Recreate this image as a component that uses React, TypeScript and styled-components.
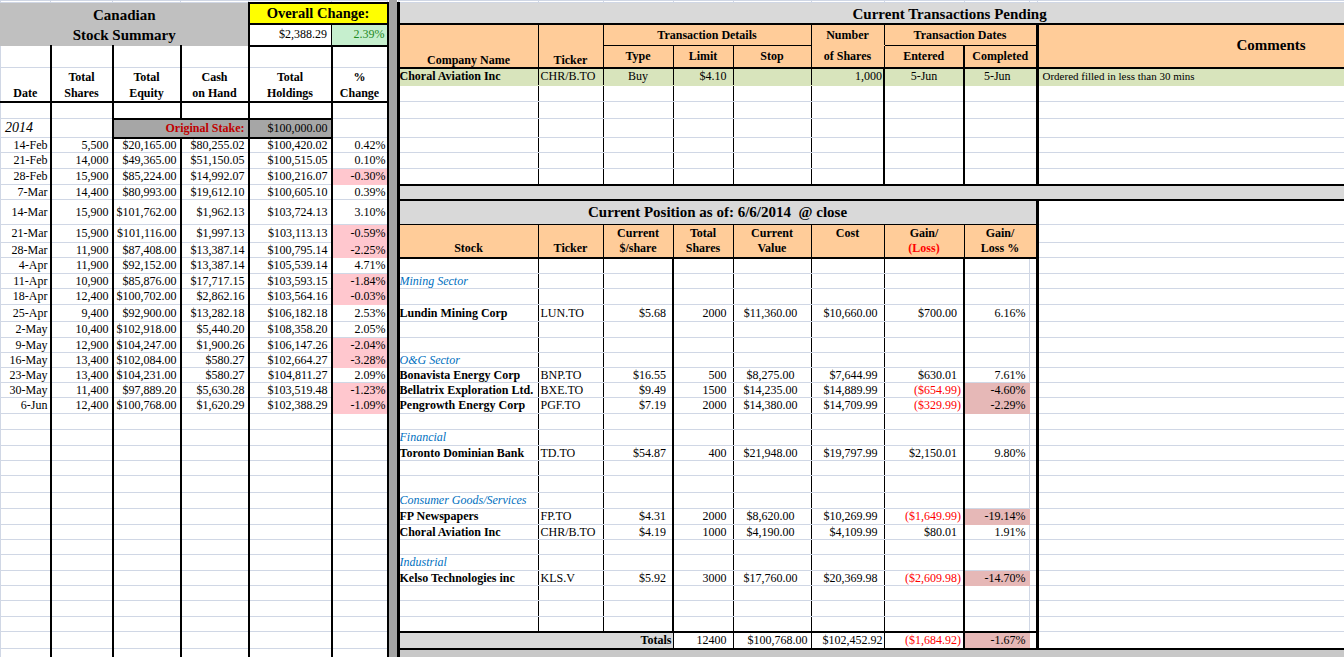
import React from 'react';
import styled, { createGlobalStyle } from 'styled-components';

// Sheet colours
const GRID = '#d0d7e5';
const ORANGE = '#ffcc99';
const GREEN_ROW = '#d8e4bc';
const BAND = '#d9d9d9';
const PINK_SOFT = '#ffc7ce';
const PINK = '#e6b8b7';

const B1 = '1px solid #000';
const B2 = '2px solid #000';
const B3 = '3px solid #000';

// Row heights shared by both panes (the window is split, rows line up)
const ROW_H = [
  2, 21, 22, 22, 18, 16, 17, 19, 15, 16, 16, 15, 25, 18, 15, 16, 15, 16, 17, 16, 15,
  15, 15, 15, 16, 16, 16, 15, 15, 17, 16, 16, 15, 15, 16, 15, 15, 16, 15, 17, 20,
];

const LEFT_COLS = [50, 62, 68, 68, 83, 56];
const RIGHT_COLS = [140, 65, 70, 60, 78, 73, 80, 65, 8, 310];

interface IWeek {
  date: string;
  shares: string;
  equity: string;
  cash: string;
  holdings: string;
  pct: string;
}

const HISTORY: IWeek[] = [
  { date: '14-Feb', shares: '5,500', equity: '$20,165.00', cash: '$80,255.02', holdings: '$100,420.02', pct: '0.42%' },
  { date: '21-Feb', shares: '14,000', equity: '$49,365.00', cash: '$51,150.05', holdings: '$100,515.05', pct: '0.10%' },
  { date: '28-Feb', shares: '15,900', equity: '$85,224.00', cash: '$14,992.07', holdings: '$100,216.07', pct: '-0.30%' },
  { date: '7-Mar', shares: '14,400', equity: '$80,993.00', cash: '$19,612.10', holdings: '$100,605.10', pct: '0.39%' },
  { date: '14-Mar', shares: '15,900', equity: '$101,762.00', cash: '$1,962.13', holdings: '$103,724.13', pct: '3.10%' },
  { date: '21-Mar', shares: '15,900', equity: '$101,116.00', cash: '$1,997.13', holdings: '$103,113.13', pct: '-0.59%' },
  { date: '28-Mar', shares: '11,900', equity: '$87,408.00', cash: '$13,387.14', holdings: '$100,795.14', pct: '-2.25%' },
  { date: '4-Apr', shares: '11,900', equity: '$92,152.00', cash: '$13,387.14', holdings: '$105,539.14', pct: '4.71%' },
  { date: '11-Apr', shares: '10,900', equity: '$85,876.00', cash: '$17,717.15', holdings: '$103,593.15', pct: '-1.84%' },
  { date: '18-Apr', shares: '12,400', equity: '$100,702.00', cash: '$2,862.16', holdings: '$103,564.16', pct: '-0.03%' },
  { date: '25-Apr', shares: '9,400', equity: '$92,900.00', cash: '$13,282.18', holdings: '$106,182.18', pct: '2.53%' },
  { date: '2-May', shares: '10,400', equity: '$102,918.00', cash: '$5,440.20', holdings: '$108,358.20', pct: '2.05%' },
  { date: '9-May', shares: '12,900', equity: '$104,247.00', cash: '$1,900.26', holdings: '$106,147.26', pct: '-2.04%' },
  { date: '16-May', shares: '13,400', equity: '$102,084.00', cash: '$580.27', holdings: '$102,664.27', pct: '-3.28%' },
  { date: '23-May', shares: '13,400', equity: '$104,231.00', cash: '$580.27', holdings: '$104,811.27', pct: '2.09%' },
  { date: '30-May', shares: '11,400', equity: '$97,889.20', cash: '$5,630.28', holdings: '$103,519.48', pct: '-1.23%' },
  { date: '6-Jun', shares: '12,400', equity: '$100,768.00', cash: '$1,620.29', holdings: '$102,388.29', pct: '-1.09%' },
];

interface IHolding {
  name: string;
  ticker: string;
  price: string;
  shares: string;
  value: string;
  cost: string;
  gain: string;
  pct: string;
}

type PositionLine =
  | { kind: 'blank' }
  | { kind: 'sector'; label: string }
  | { kind: 'stock'; stock: IHolding };

const blank: PositionLine = { kind: 'blank' };
const sector = (label: string): PositionLine => ({ kind: 'sector', label });
const stock = (...v: string[]): PositionLine => ({
  kind: 'stock',
  stock: { name: v[0], ticker: v[1], price: v[2], shares: v[3], value: v[4], cost: v[5], gain: v[6], pct: v[7] },
});

// rows 15..38 of the sheet
const POSITIONS: PositionLine[] = [
  blank,
  sector('Mining Sector'),
  blank,
  stock('Lundin Mining Corp', 'LUN.TO', '$5.68', '2000', '$11,360.00', '$10,660.00', '$700.00', '6.16%'),
  blank,
  blank,
  sector('O&G Sector'),
  stock('Bonavista Energy Corp', 'BNP.TO', '$16.55', '500', '$8,275.00', '$7,644.99', '$630.01', '7.61%'),
  stock('Bellatrix Exploration Ltd.', 'BXE.TO', '$9.49', '1500', '$14,235.00', '$14,889.99', '($654.99)', '-4.60%'),
  stock('Pengrowth Energy Corp', 'PGF.TO', '$7.19', '2000', '$14,380.00', '$14,709.99', '($329.99)', '-2.29%'),
  blank,
  sector('Financial'),
  stock('Toronto Dominian Bank', 'TD.TO', '$54.87', '400', '$21,948.00', '$19,797.99', '$2,150.01', '9.80%'),
  blank,
  blank,
  sector('Consumer Goods/Services'),
  stock('FP Newspapers', 'FP.TO', '$4.31', '2000', '$8,620.00', '$10,269.99', '($1,649.99)', '-19.14%'),
  stock('Choral Aviation Inc', 'CHR/B.TO', '$4.19', '1000', '$4,190.00', '$4,109.99', '$80.01', '1.91%'),
  blank,
  sector('Industrial'),
  stock('Kelso Technologies inc', 'KLS.V', '$5.92', '3000', '$17,760.00', '$20,369.98', '($2,609.98)', '-14.70%'),
  blank,
  blank,
  blank,
];

const POSITION_HEAD: { top: React.ReactNode; bottom: React.ReactNode }[] = [
  { top: '', bottom: 'Stock' },
  { top: '', bottom: 'Ticker' },
  { top: 'Current', bottom: '$/share' },
  { top: 'Total', bottom: 'Shares' },
  { top: 'Current', bottom: 'Value' },
  { top: 'Cost', bottom: '' },
  { top: 'Gain/', bottom: 'loss' },
  { top: 'Gain/', bottom: 'Loss %' },
];

const TX_RIGHT = [B1, B1, B1, B1, B1, B2, B2, B3];

const GlobalStyle = createGlobalStyle`
  html, body {
    margin: 0;
    padding: 0;
    background: #fff;
  }
  body {
    font-family: 'Liberation Serif', 'Times New Roman', serif;
  }
`;

export default function App() {
  return (
    <>
      <GlobalStyle />
      <Sheet>
        <SummaryPane />
        <SplitBar />
        <PositionsPane />
      </Sheet>
    </>
  );
}

const SummaryPane = () => (
  <Grid $w={387}>
    <colgroup>
      {LEFT_COLS.map((w, i) => (
        <Col key={i} $w={w} />
      ))}
    </colgroup>
    <tbody>
      <Row $h={ROW_H[0]}>
        {LEFT_COLS.map((_, c) => (
          <Cell key={c} />
        ))}
      </Row>
      <Row $h={ROW_H[1]}>
        <SummaryTitle colSpan={4} rowSpan={2}>
          Canadian
          <br />
          Stock Summary
        </SummaryTitle>
        <OverallLabel colSpan={2} $l={B2} $r={B2} $t={B2} $b={B2}>
          Overall Change:
        </OverallLabel>
      </Row>
      <Row $h={ROW_H[2]}>
        <NumCell $l={B2} $r={B1} $b={B2} $pr={4}>
          $2,388.29
        </NumCell>
        <GoodCell $r={B2} $b={B2} $pr={2}>
          2.39%
        </GoodCell>
      </Row>
      <Row $h={ROW_H[3]}>
        {LEFT_COLS.map((_, c) => (
          <Cell key={c} $r={B2} />
        ))}
      </Row>
      <Row $h={ROW_H[4]}>
        <LeftHead rowSpan={2} $r={B2} $b={B2}>
          Date
        </LeftHead>
        <LeftHead rowSpan={2} $r={B2} $b={B2}>
          Total
          <br />
          Shares
        </LeftHead>
        <LeftHead rowSpan={2} $r={B2} $b={B2}>
          Total
          <br />
          Equity
        </LeftHead>
        <LeftHead rowSpan={2} $r={B2} $b={B2}>
          Cash
          <br />
          on Hand
        </LeftHead>
        <LeftHead rowSpan={2} $r={B2} $b={B2}>
          Total
          <br />
          Holdings
        </LeftHead>
        <LeftHead rowSpan={2} $r={B2} $b={B2}>
          %
          <br />
          Change
        </LeftHead>
      </Row>
      <Row $h={ROW_H[5]} />
      <Row $h={ROW_H[6]}>
        {LEFT_COLS.map((_, c) => (
          <Cell key={c} $r={B2} />
        ))}
      </Row>
      <Row $h={ROW_H[7]}>
        <YearCell $r={B2}>2014</YearCell>
        <Cell $r={B2} />
        <StakeLabel colSpan={2} $l={B2} $r={B2} $t={B2} $b={B2} $pr={3}>
          Original Stake:
        </StakeLabel>
        <StakeValue $r={B2} $t={B2} $b={B2} $pr={3}>
          $100,000.00
        </StakeValue>
        <Cell $r={B2} />
      </Row>
      {HISTORY.map((h, i) => {
        const neg = h.pct.startsWith('-');
        return (
          <Row key={h.date} $h={ROW_H[8 + i]}>
            <NumCell $r={B2}>{h.date}</NumCell>
            <NumCell $r={B2} $pr={3}>
              {h.shares}
            </NumCell>
            <NumCell $r={B2} $pr={3}>
              {h.equity}
            </NumCell>
            <NumCell $r={B2} $pr={3}>
              {h.cash}
            </NumCell>
            <NumCell $r={B2} $pr={3}>
              {h.holdings}
            </NumCell>
            <NumCell $r={B2} $pr={1} $fill={neg ? PINK_SOFT : undefined}>
              {h.pct}
            </NumCell>
          </Row>
        );
      })}
      {ROW_H.slice(8 + HISTORY.length).map((h, i) => (
        <Row key={`e${i}`} $h={h}>
          {LEFT_COLS.map((_, c) => (
            <Cell key={c} $r={B2} />
          ))}
        </Row>
      ))}
    </tbody>
  </Grid>
);

const PositionsPane = () => (
  <Grid $w={949}>
    <colgroup>
      {RIGHT_COLS.map((w, i) => (
        <Col key={i} $w={w} />
      ))}
    </colgroup>
    <tbody>
      <Row $h={ROW_H[0]}>
        {RIGHT_COLS.map((_, c) => (
          <Cell key={c} />
        ))}
      </Row>

      {/* Current transactions pending */}
      <Row $h={ROW_H[1]}>
        <BandTitle colSpan={10} $l={B3} $b={B2} $pl={453}>
          Current Transactions Pending
        </BandTitle>
      </Row>
      <Row $h={ROW_H[2]}>
        <OrangeHead rowSpan={2} $l={B3} $r={B1} $b={B2} $v="bottom">
          Company Name
        </OrangeHead>
        <OrangeHead rowSpan={2} $r={B1} $b={B2} $v="bottom">
          Ticker
        </OrangeHead>
        <OrangeHead colSpan={3} $r={B1} $b={B1}>
          Transaction Details
        </OrangeHead>
        <OrangeHead $r={B1}>Number</OrangeHead>
        <OrangeHead colSpan={3} $r={B3} $b={B1}>
          Transaction Dates
        </OrangeHead>
        <CommentsHead rowSpan={2} $b={B2} $pl={198}>
          Comments
        </CommentsHead>
      </Row>
      <Row $h={ROW_H[3]}>
        <OrangeHead $r={B1} $b={B2}>Type</OrangeHead>
        <OrangeHead $r={B1} $b={B2}>Limit</OrangeHead>
        <OrangeHead $r={B1} $b={B2}>Stop</OrangeHead>
        <OrangeHead $r={B1} $b={B2}>of Shares</OrangeHead>
        <OrangeHead $r={B2} $b={B2}>Entered</OrangeHead>
        <OrangeHead colSpan={2} $r={B3} $b={B2}>
          Completed
        </OrangeHead>
      </Row>
      <Row $h={ROW_H[4]}>
        <NameCell $fill={GREEN_ROW} $l={B3} $r={TX_RIGHT[0]} $pl={0}>
          Choral Aviation Inc
        </NameCell>
        <Cell $fill={GREEN_ROW} $r={TX_RIGHT[1]}>
          CHR/B.TO
        </Cell>
        <Cell $fill={GREEN_ROW} $r={TX_RIGHT[2]} $align="center">
          Buy
        </Cell>
        <NumCell $fill={GREEN_ROW} $r={TX_RIGHT[3]} $pr={6}>
          $4.10
        </NumCell>
        <Cell $fill={GREEN_ROW} $r={TX_RIGHT[4]} />
        <NumCell $fill={GREEN_ROW} $r={TX_RIGHT[5]} $pr={1}>
          1,000
        </NumCell>
        <Cell $fill={GREEN_ROW} $r={TX_RIGHT[6]} $align="center">
          5-Jun
        </Cell>
        <Cell colSpan={2} $fill={GREEN_ROW} $r={TX_RIGHT[7]} $align="center" $pr={8}>
          5-Jun
        </Cell>
        <CommentCell $fill={GREEN_ROW} $pl={4}>
          Ordered filled in less than 30 mins
        </CommentCell>
      </Row>
      {ROW_H.slice(5, 11).map((h, i) => (
        <Row key={`tx${i}`} $h={h}>
          {TX_RIGHT.map((r, c) => (
            <Cell key={c} colSpan={c === 7 ? 2 : 1} $l={c === 0 ? B3 : undefined} $r={r} />
          ))}
          <Cell />
        </Row>
      ))}
      <Row $h={ROW_H[11]}>
        <BandTitle colSpan={10} $l={B3} $t={B2} $b={B2} />
      </Row>

      {/* Current position */}
      <Row $h={ROW_H[12]}>
        <PositionTitle colSpan={9} $l={B3} $r={B3} $b={B1}>
          Current Position as of: 6/6/2014{'\u00a0\u00a0'}@ close
        </PositionTitle>
        <Cell />
      </Row>
      <Row $h={ROW_H[13]}>
        {POSITION_HEAD.map((h, c) => (
          <PositionHead
            key={c}
            rowSpan={2}
            colSpan={c === 7 ? 2 : 1}
            $l={c === 0 ? B3 : undefined}
            $r={c === 7 ? B3 : B1}
            $b={B2}
          >
            {h.top || '\u00a0'}
            <br />
            {c === 6 ? <LossText>(Loss)</LossText> : h.bottom || '\u00a0'}
          </PositionHead>
        ))}
        <Cell />
      </Row>
      <Row $h={ROW_H[14]}>
        <Cell />
      </Row>
      {POSITIONS.map((line, i) => (
        <PositionRow key={i} line={line} h={ROW_H[15 + i]} />
      ))}
      <Row $h={ROW_H[39]}>
        <TotalsLabel colSpan={3} $l={B3} $r={B1} $t={B2} $b={B2} $pr={1}>
          Totals
        </TotalsLabel>
        <NumCell $r={B1} $t={B2} $b={B2} $pr={6}>
          12400
        </NumCell>
        <NumCell $r={B1} $t={B2} $b={B2} $pr={3}>
          $100,768.00
        </NumCell>
        <NumCell $r={B1} $t={B2} $b={B2} $pr={1}>
          $102,452.92
        </NumCell>
        <LossCell $r={B2} $t={B2} $b={B2} $pr={2}>
          ($1,684.92)
        </LossCell>
        <NumCell $fill={PINK} $t={B2} $b={B2} $pr={3}>
          -1.67%
        </NumCell>
        <Cell $r={B3} $t={B2} $b={B2} />
        <Cell $b={B2} />
      </Row>
      <Row $h={ROW_H[40]}>
        <BottomBand colSpan={10} $l={B3} $t={B2} />
      </Row>
    </tbody>
  </Grid>
);

const PositionRow = ({ line, h }: { line: PositionLine; h: number }) => {
  const s = line.kind === 'stock' ? line.stock : null;
  const gainNeg = !!s && s.gain.startsWith('(');
  const pctNeg = !!s && s.pct.startsWith('-');
  return (
    <Row $h={h}>
      {line.kind === 'sector' ? (
        <SectorCell $l={B3} $r={B1} $pl={0}>
          {line.label}
        </SectorCell>
      ) : (
        <NameCell $l={B3} $r={B1} $pl={0}>
          {s?.name}
        </NameCell>
      )}
      <Cell $r={B1}>{s?.ticker}</Cell>
      <NumCell $r={B2} $pr={6}>
        {s?.price}
      </NumCell>
      <NumCell $r={B1} $pr={6}>
        {s?.shares}
      </NumCell>
      <Cell $r={B1} $align="center" $pr={5}>
        {s?.value}
      </Cell>
      <NumCell $r={B1} $pr={6}>
        {s?.cost}
      </NumCell>
      {gainNeg ? (
        <LossCell $r={B2} $pr={2}>
          {s?.gain}
        </LossCell>
      ) : (
        <NumCell $r={B2} $pr={6}>
          {s?.gain}
        </NumCell>
      )}
      <NumCell $fill={pctNeg ? PINK : undefined} $pr={3}>
        {s?.pct}
      </NumCell>
      <Cell $r={B3} />
      <Cell />
    </Row>
  );
};

interface CellProps {
  $l?: string;
  $r?: string;
  $t?: string;
  $b?: string;
  $fill?: string;
  $align?: 'left' | 'center' | 'right';
  $v?: 'top' | 'middle' | 'bottom';
  $pl?: number;
  $pr?: number;
}

const edges = (p: CellProps) => `
  ${p.$fill ? `background: ${p.$fill}; border-color: ${p.$fill};` : ''}
  ${p.$l ? `border-left: ${p.$l};` : ''}
  ${p.$r ? `border-right: ${p.$r};` : ''}
  ${p.$t ? `border-top: ${p.$t};` : ''}
  ${p.$b ? `border-bottom: ${p.$b};` : ''}
`;

const Sheet = styled.div`
  display: flex;
  align-items: flex-start;
  width: 1344px;
  height: 657px;
  overflow: hidden;
  background: #fff;
`;

const SplitBar = styled.div`
  flex: none;
  width: 8px;
  height: 657px;
  background: #a5a5a5;
`;

const Grid = styled.table<{ $w: number }>`
  flex: none;
  width: ${p => p.$w}px;
  table-layout: fixed;
  border-collapse: collapse;
  font-family: 'Liberation Serif', 'Times New Roman', serif;
  font-size: 12px;
  color: #000;
`;

const Col = styled.col<{ $w: number }>`
  width: ${p => p.$w}px;
`;

const Row = styled.tr<{ $h: number }>`
  height: ${p => p.$h}px;
`;

const Cell = styled.td<CellProps>`
  padding: 0 ${p => p.$pr ?? 2}px 0 ${p => p.$pl ?? 2}px;
  border: 1px solid ${GRID};
  white-space: nowrap;
  overflow: hidden;
  line-height: 13px;
  text-align: ${p => p.$align ?? 'left'};
  vertical-align: ${p => p.$v ?? 'middle'};
  ${edges}
`;

const NumCell = styled(Cell)`
  text-align: right;
`;

const NameCell = styled(Cell)`
  font-weight: 700;
`;

const SectorCell = styled(Cell)`
  font-style: italic;
  color: #0070c0;
`;

const LossCell = styled(NumCell)`
  color: #ff0000;
`;

const LossText = styled.span`
  color: #ff0000;
`;

const GoodCell = styled(NumCell).attrs<CellProps>(p => ({ $fill: p.$fill ?? '#c6efce' }))`
  color: #1e8a1e;
`;

const SummaryTitle = styled(Cell).attrs<CellProps>(p => ({ $fill: p.$fill ?? '#c0c0c0' }))`
  font-size: 15px;
  font-weight: 700;
  line-height: 20px;
  text-align: center;
  vertical-align: bottom;
`;

const OverallLabel = styled(Cell).attrs<CellProps>(p => ({ $fill: p.$fill ?? '#ffff00' }))`
  font-size: 14.5px;
  font-weight: 700;
  line-height: 17px;
  text-align: center;
`;

const LeftHead = styled(Cell)`
  font-weight: 700;
  line-height: 16px;
  text-align: center;
  vertical-align: bottom;
  padding-bottom: 0;
`;

const YearCell = styled(Cell)`
  font-size: 14px;
  font-style: italic;
  line-height: 16px;
  padding-left: 4px;
`;

const StakeLabel = styled(NumCell).attrs<CellProps>(p => ({ $fill: p.$fill ?? '#a6a6a6' }))`
  font-weight: 700;
  color: #c00000;
`;

const StakeValue = styled(NumCell).attrs<CellProps>(p => ({ $fill: p.$fill ?? '#a6a6a6' }))``;

const BandTitle = styled(Cell).attrs<CellProps>(p => ({ $fill: p.$fill ?? BAND }))`
  font-size: 15px;
  font-weight: 700;
  line-height: 17px;
  vertical-align: bottom;
`;

const PositionTitle = styled(Cell).attrs<CellProps>(p => ({ $fill: p.$fill ?? BAND }))`
  font-size: 15px;
  font-weight: 700;
  line-height: 17px;
  text-align: center;
`;

const OrangeHead = styled(Cell).attrs<CellProps>(p => ({ $fill: p.$fill ?? ORANGE }))`
  font-weight: 700;
  line-height: 14px;
  text-align: center;
`;

const CommentsHead = styled(OrangeHead)`
  font-size: 15px;
  line-height: 17px;
  text-align: left;
`;

const PositionHead = styled(OrangeHead)`
  line-height: 15px;
`;

const CommentCell = styled(Cell)`
  font-size: 11px;
`;

const TotalsLabel = styled(NumCell).attrs<CellProps>(p => ({ $fill: p.$fill ?? BAND }))`
  font-weight: 700;
`;

const BottomBand = styled(Cell).attrs<CellProps>(p => ({ $fill: p.$fill ?? '#c8c8c8' }))``;
